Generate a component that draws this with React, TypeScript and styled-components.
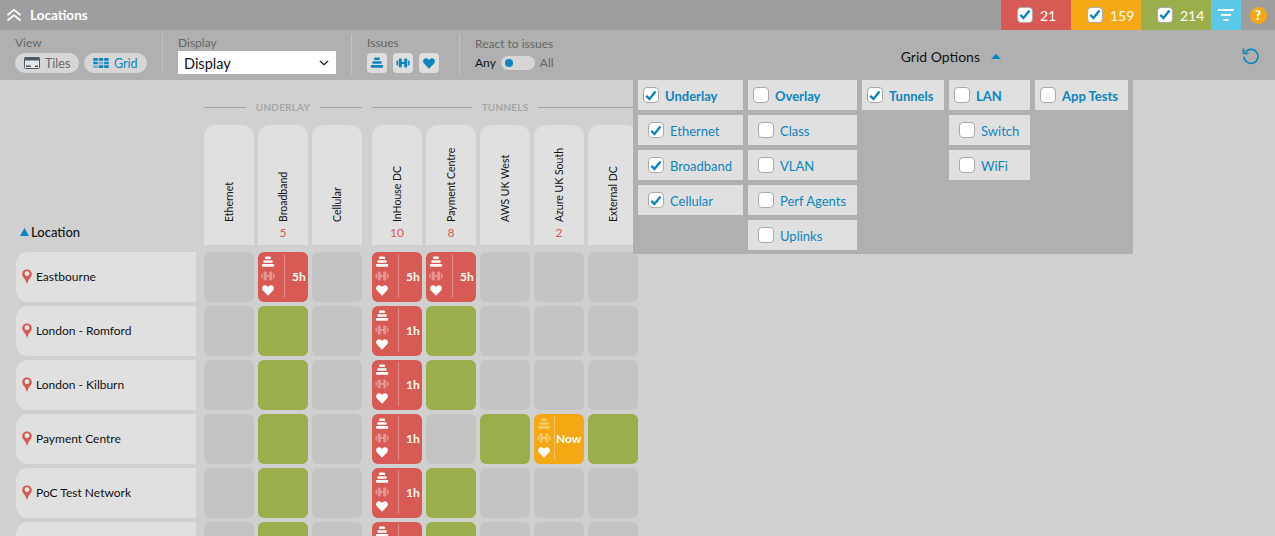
import React from 'react';
import styled, {createGlobalStyle} from 'styled-components';

const GlobalStyle = createGlobalStyle`
    html, body {
        margin: 0;
        padding: 0;
        background: #d0d0d0;
        font-family: Lato, "Liberation Sans", sans-serif;
    }
`;

const BLUE = '#0d85bd';

//Styled Components
const Page = styled.div`
    position: relative;
    width: 1275px;
    height: 536px;
    overflow: hidden;
    background: #d0d0d0;
`;

const Header = styled.header`
    display: flex;
    align-items: stretch;
    height: 30px;
    background: #9e9e9e;
`;

const HeaderTitle = styled.div`
    display: flex;
    align-items: center;
    gap: 8px;
    padding: 0 0 1px 6px;
    color: #fff;
    font-size: 13.5px;
    font-weight: 700;
    flex: 1;
`;

const StatusTab = styled.div<{$color: string}>`
    display: flex;
    align-items: center;
    gap: 7px;
    box-sizing: border-box;
    width: 70px;
    padding-left: 16px;
    background: ${p => p.$color};
    color: #fff;
    font-size: 14px;
`;

const FilterTab = styled.div`
    display: flex;
    align-items: center;
    justify-content: center;
    width: 30px;
    background: #5bc8e8;
`;

const HelpTab = styled.div`
    display: flex;
    align-items: center;
    justify-content: center;
    width: 34px;
`;

const HelpDot = styled.div`
    width: 17px;
    height: 17px;
    border-radius: 50%;
    background: #f4a914;
    color: #fff;
    font-size: 13px;
    font-weight: 900;
    line-height: 17px;
    text-align: center;
`;

const Toolbar = styled.div`
    display: flex;
    align-items: flex-start;
    height: 50px;
    box-sizing: border-box;
    padding: 4px 15px 0;
    background: #b0b0b0;
`;

const ToolSection = styled.div<{$width: number; $divider?: boolean}>`
    box-sizing: border-box;
    width: ${p => p.$width}px;
    height: 40px;
    padding-left: ${p => (p.$divider ? 15 : 0)}px;
    border-left: ${p => (p.$divider ? '1px solid #c2c2c2' : 'none')};
`;

const ToolLabel = styled.div<{$top?: number}>`
    color: #666;
    font-size: 12px;
    line-height: 14px;
    margin-top: ${p => p.$top ?? 2}px;
`;

const ToolRow = styled.div<{$gap: number; $top: number}>`
    display: flex;
    align-items: center;
    gap: ${p => p.$gap}px;
    margin-top: ${p => p.$top}px;
`;

const Pill = styled.div<{$active?: boolean; $width: number}>`
    display: flex;
    align-items: center;
    gap: 5px;
    box-sizing: border-box;
    width: ${p => p.$width}px;
    height: 20px;
    padding-left: 9px;
    border-radius: 10px;
    background: #d6d6d6;
    color: ${p => (p.$active ? BLUE : '#666')};
    font-size: 12.5px;
`;

const SelectBox = styled.div`
    display: flex;
    align-items: center;
    justify-content: space-between;
    box-sizing: border-box;
    width: 158px;
    height: 23px;
    margin-top: 1px;
    padding: 1px 7px 0 6px;
    background: #fff;
    color: #111;
    font-size: 14.5px;
`;

const IssueButton = styled.div`
    display: flex;
    align-items: center;
    justify-content: center;
    width: 20px;
    height: 20px;
    border-radius: 4px;
    background: #dedede;
`;

const ToggleText = styled.span<{$on?: boolean}>`
    color: ${p => (p.$on ? '#111' : '#666')};
    font-size: 12px;
`;

const ToggleTrack = styled.div`
    display: flex;
    align-items: center;
    box-sizing: border-box;
    width: 34px;
    height: 14px;
    padding-left: 4px;
    border-radius: 7px;
    background: #d6d6d6;
`;

const ToggleKnob = styled.div`
    width: 8px;
    height: 8px;
    border-radius: 50%;
    background: ${BLUE};
`;

const GridOptionsToggle = styled.div`
    display: flex;
    align-items: center;
    gap: 11px;
    margin-left: auto;
    margin-top: 14px;
    color: #111;
    font-size: 14px;
`;

const UndoButton = styled.div`
    display: flex;
    margin-left: 241px;
    margin-top: 13px;
`;

const OptionsPanel = styled.div`
    position: absolute;
    z-index: 2;
    top: 80px;
    left: 633px;
    display: flex;
    gap: 5px;
    padding: 0 5px 4px;
    background: #b0b0b0;
`;

const OptionColumn = styled.div<{$width: number}>`
    display: flex;
    flex-direction: column;
    gap: 5px;
    width: ${p => p.$width}px;
`;

const OptionItem = styled.div<{$sub?: boolean}>`
    display: flex;
    align-items: center;
    gap: 6px;
    box-sizing: border-box;
    height: 30px;
    padding: 1px 0 0 ${p => (p.$sub ? 10 : 5)}px;
    background: #e0e0e0;
    color: ${BLUE};
    font-size: 13px;
    font-weight: ${p => (p.$sub ? 400 : 700)};
`;

const CheckFrame = styled.span`
    display: flex;
    align-items: center;
    justify-content: center;
    box-sizing: border-box;
    width: 16px;
    height: 16px;
    flex: none;
    margin-top: -1px;
    border: 1px solid #a9a9a9;
    border-radius: 4px;
    background: #fff;
`;

const Board = styled.div`
    padding: 20px 0 0 16px;
`;

const HeadArea = styled.div`
    display: flex;
    align-items: flex-end;
    gap: 8px;
`;

const LocationHead = styled.div`
    display: flex;
    align-items: center;
    gap: 2px;
    box-sizing: border-box;
    width: 180px;
    height: 20px;
    margin-bottom: 10px;
    padding-left: 4px;
    color: #111;
    font-size: 13px;
    font-weight: 500;
`;

const Groups = styled.div`
    display: flex;
    gap: 10px;
`;

const GroupBlock = styled.div`
    display: flex;
    flex-direction: column;
    gap: 11px;
`;

const GroupTitle = styled.div`
    display: flex;
    align-items: center;
    gap: 10px;
    height: 14px;
    color: #a6a6a6;
    font-size: 10px;
    font-weight: 700;
    letter-spacing: 0.2px;

    &::before, &::after {
        content: '';
        flex: 1;
        height: 1px;
        background: #a6a6a6;
    }
`;

const CellRow = styled.div`
    display: flex;
    gap: 4px;
`;

const HeadCell = styled.div`
    display: flex;
    flex-direction: column;
    align-items: center;
    box-sizing: border-box;
    width: 50px;
    height: 120px;
    padding-bottom: 6px;
    border-radius: 12px 12px 0 0;
    background: #e0e0e0;
    margin-bottom: 7px;
`;

const HeadName = styled.div`
    flex: 1;
    display: flex;
    align-items: center;
    justify-content: flex-start;
    margin-bottom: 4px;
    writing-mode: vertical-rl;
    transform: rotate(180deg);
    color: #111;
    font-size: 10.5px;
`;

const HeadCount = styled.div`
    height: 13px;
    color: #d75a54;
    font-size: 12px;
    line-height: 13px;
`;

const Rows = styled.div`
    display: flex;
    flex-direction: column;
    gap: 4px;
`;

const Row = styled.div`
    display: flex;
    gap: 8px;
`;

const RowLabel = styled.div`
    display: flex;
    align-items: center;
    gap: 4px;
    box-sizing: border-box;
    width: 180px;
    height: 50px;
    padding: 0 0 1px 6px;
    border-radius: 12px 0 0 12px;
    background: #e0e0e0;
    color: #111;
    font-size: 12px;
`;

const Cell = styled.div<{$color: string}>`
    display: flex;
    width: 50px;
    height: 50px;
    border-radius: 6px;
    background: ${p => p.$color};
`;

const IconCol = styled.div<{$width: number}>`
    display: flex;
    flex-direction: column;
    align-items: flex-start;
    justify-content: space-between;
    box-sizing: border-box;
    width: ${p => p.$width}px;
    height: 44px;
    margin-top: 2px;
    padding: 1px 0 1px 3px;
    border-right: 1px solid rgba(255, 255, 255, 0.3);
`;

const CellTime = styled.div<{$inset: number}>`
    flex: 1;
    display: flex;
    align-items: center;
    padding: 0 0 2px ${p => p.$inset}px;
    color: #fff;
    font-size: 12px;
    font-weight: 700;
`;

//Icons
const StackIcon = ({color, dim}: {color: string; dim?: boolean}) => (
    <svg width="14" height="14" viewBox="0 0 14 14" opacity={dim ? 0.35 : 1}>
        <rect x="4" y="1.500" width="6" height="2.600" rx="1.200" fill={color}/>
        <rect x="2.300" y="5.200" width="9.400" height="2.600" rx="1" fill={color}/>
        <rect x="0.800" y="9" width="12.400" height="2.800" rx="1" fill={color}/>
    </svg>
);

const PulseIcon = ({color, dim}: {color: string; dim?: boolean}) => (
    <svg width="14" height="14" viewBox="0 0 14 14" opacity={dim ? 0.35 : 1}>
        <rect x="0.500" y="4.500" width="1.600" height="5" rx="0.800" fill={color}/>
        <rect x="2.800" y="2.500" width="3" height="9" rx="1" fill={color}/>
        <rect x="8.200" y="2.500" width="3" height="9" rx="1" fill={color}/>
        <rect x="11.900" y="4.500" width="1.600" height="5" rx="0.800" fill={color}/>
        <rect x="5" y="6" width="4" height="2" fill={color}/>
    </svg>
);

const HeartIcon = ({color}: {color: string}) => (
    <svg width="14" height="14" viewBox="0 0 14 14">
        <path d="M7 12.800 2 7.600C.8 6.300.8 4.200 2 3c1.300-1.200 3.300-1 4.300.3l.7.8.7-.8c1-1.300 3-1.500 4.300-.3 1.200 1.200 1.200 3.300 0 4.600z" fill={color}/>
    </svg>
);

const PinIcon = () => (
    <svg width="10" height="16" viewBox="0 0 10 16">
        <path d="M5 .4C2.300.4.200 2.400.200 5c0 1.600.800 2.900 1.800 4.100C3.200 10.700 4.400 12.800 5 15.600c.6-2.800 1.800-4.900 3-6.500 1-1.200 1.800-2.500 1.800-4.100C9.800 2.400 7.700.4 5 .4z" fill="#d75a54"/>
        <circle cx="5" cy="4.700" r="2.400" fill="#e6e6e6"/>
    </svg>
);

const CheckMark = () => (
    <svg width="12" height="11" viewBox="0 0 12 11">
        <path d="M1.300 5.800 4.500 9l6-7.400" fill="none" stroke={BLUE} strokeWidth="2.400"/>
    </svg>
);

const CheckBox = ({checked}: {checked?: boolean}) => (
    <CheckFrame>{checked && <CheckMark/>}</CheckFrame>
);

const TriangleUp = ({width, height}: {width: number; height: number}) => (
    <svg width={width} height={height} viewBox="0 0 10 8" preserveAspectRatio="none">
        <path d="M5 0 10 8H0z" fill={BLUE}/>
    </svg>
);

//Data
type CellKind = '' | 'g' | 'r5' | 'r1' | 'r' | 'now';

const underlay = [
    {name: 'Ethernet'},
    {name: 'Broadband', count: 5},
    {name: 'Cellular'},
];

const tunnels = [
    {name: 'InHouse DC', count: 10},
    {name: 'Payment Centre', count: 8},
    {name: 'AWS UK West'},
    {name: 'Azure UK South', count: 2},
    {name: 'External DC'},
];

const rows: {name: string; cells: CellKind[]}[] = [
    {name: 'Eastbourne', cells: ['', 'r5', '', 'r5', 'r5', '', '', '']},
    {name: 'London - Romford', cells: ['', 'g', '', 'r1', 'g', '', '', '']},
    {name: 'London - Kilburn', cells: ['', 'g', '', 'r1', 'g', '', '', '']},
    {name: 'Payment Centre', cells: ['', 'g', '', 'r1', '', 'g', 'now', 'g']},
    {name: 'PoC Test Network', cells: ['', 'g', '', 'r1', 'g', '', '', '']},
    {name: '', cells: ['', 'g', '', 'r', 'g', '', '', '']},
];

const optionColumns = [
    {width: 105, items: [
        {label: 'Underlay', checked: true},
        {label: 'Ethernet', checked: true, sub: true},
        {label: 'Broadband', checked: true, sub: true},
        {label: 'Cellular', checked: true, sub: true},
    ]},
    {width: 109, items: [
        {label: 'Overlay'},
        {label: 'Class', sub: true},
        {label: 'VLAN', sub: true},
        {label: 'Perf Agents', sub: true},
        {label: 'Uplinks', sub: true},
    ]},
    {width: 82, items: [{label: 'Tunnels', checked: true}]},
    {width: 81, items: [
        {label: 'LAN'},
        {label: 'Switch', sub: true},
        {label: 'WiFi', sub: true},
    ]},
    {width: 93, items: [{label: 'App Tests'}]},
];

const timeLabel: Record<string, string> = {r5: '5h', r1: '1h', r: ''};

const GridCell = ({kind}: {kind: CellKind}) => {
    if (kind === '') return <Cell $color="#c4c4c4"/>;
    if (kind === 'g') return <Cell $color="#9aae4c"/>;
    if (kind === 'now') {
        return (
            <Cell $color="#f4a914">
                <IconCol $width={21}>
                    <StackIcon color="#fff" dim/>
                    <PulseIcon color="#fff" dim/>
                    <HeartIcon color="#fff"/>
                </IconCol>
                <CellTime $inset={1}>Now</CellTime>
            </Cell>
        );
    }
    return (
        <Cell $color="#d75a54">
            <IconCol $width={27}>
                <StackIcon color="#fff"/>
                <PulseIcon color="#fff" dim/>
                <HeartIcon color="#fff"/>
            </IconCol>
            <CellTime $inset={7}>{timeLabel[kind]}</CellTime>
        </Cell>
    );
};

const HeadGroup = ({title, columns}: {title: string; columns: {name: string; count?: number}[]}) => (
    <GroupBlock>
        <GroupTitle>{title}</GroupTitle>
        <CellRow>
            {columns.map(col => (
                <HeadCell key={col.name}>
                    <HeadName>{col.name}</HeadName>
                    <HeadCount>{col.count}</HeadCount>
                </HeadCell>
            ))}
        </CellRow>
    </GroupBlock>
);

export default function App() {
    return (
        <Page>
            <GlobalStyle/>
            {/* Title bar */}
            <Header>
                <HeaderTitle>
                    <svg width="16" height="14" viewBox="0 0 16 14">
                        <path d="M1.500 7 8 1.800 14.500 7M1.500 12.500 8 7.300l6.500 5.200" fill="none" stroke="#fff" strokeWidth="1.800"/>
                    </svg>
                    Locations
                </HeaderTitle>
                <StatusTab $color="#d75a54"><CheckBox checked/>21</StatusTab>
                <StatusTab $color="#f4a914"><CheckBox checked/>159</StatusTab>
                <StatusTab $color="#9aae4c"><CheckBox checked/>214</StatusTab>
                <FilterTab>
                    <svg width="18" height="14" viewBox="0 0 18 14">
                        <path d="M1 2h16M4 7h10M6.500 12h5" stroke="#fff" strokeWidth="2"/>
                    </svg>
                </FilterTab>
                <HelpTab><HelpDot>?</HelpDot></HelpTab>
            </Header>

            {/* Toolbar */}
            <Toolbar>
                <ToolSection $width={147}>
                    <ToolLabel>View</ToolLabel>
                    <ToolRow $gap={5} $top={3}>
                        <Pill $width={64}>
                            <svg width="16" height="12" viewBox="0 0 16 12">
                                <rect x="0.500" y="0.500" width="15" height="11" rx="1" fill="#e6e6e6" stroke="#4f5c66"/>
                                <rect x="0.500" y="0.500" width="15" height="3" fill="#4f5c66"/>
                                <rect x="2" y="8.500" width="5" height="1.500" fill="#4f5c66"/>
                                <rect x="11" y="8.500" width="3" height="1.500" fill="#4f5c66"/>
                            </svg>
                            Tiles
                        </Pill>
                        <Pill $width={63} $active>
                            <svg width="16" height="10" viewBox="0 0 17 11">
                                <path d="M0 0h5v3H0zM6 0h5v3H6zM12 0h5v3h-5zM0 4h5v3H0zM12 4h5v3h-5zM6 8h5v3H6zM12 8h5v3h-5z" fill={BLUE}/>
                                <path d="M6 4h5v3H6zM0 8h5v3H0z" fill="#6db3d6"/>
                            </svg>
                            Grid
                        </Pill>
                    </ToolRow>
                </ToolSection>
                <ToolSection $width={189} $divider>
                    <ToolLabel>Display</ToolLabel>
                    <SelectBox>
                        Display
                        <svg width="10" height="6" viewBox="0 0 12 7" preserveAspectRatio="none">
                            <path d="M1 1l5 4.500L11 1" fill="none" stroke="#111" strokeWidth="1.500"/>
                        </svg>
                    </SelectBox>
                </ToolSection>
                <ToolSection $width={108} $divider>
                    <ToolLabel>Issues</ToolLabel>
                    <ToolRow $gap={6} $top={3}>
                        <IssueButton><StackIcon color={BLUE}/></IssueButton>
                        <IssueButton><PulseIcon color={BLUE}/></IssueButton>
                        <IssueButton><HeartIcon color={BLUE}/></IssueButton>
                    </ToolRow>
                </ToolSection>
                <ToolSection $width={110} $divider>
                    <ToolLabel $top={3}>React to issues</ToolLabel>
                    <ToolRow $gap={5} $top={4}>
                        <ToggleText $on>Any</ToggleText>
                        <ToggleTrack><ToggleKnob/></ToggleTrack>
                        <ToggleText>All</ToggleText>
                    </ToolRow>
                </ToolSection>
                <GridOptionsToggle>
                    Grid Options
                    <TriangleUp width={10} height={5}/>
                </GridOptionsToggle>
                <UndoButton>
                    <svg width="18" height="18" viewBox="0 0 18 18">
                        <path d="M3.200 5.500A7 7 0 1 1 2 9.500" fill="none" stroke={BLUE} strokeWidth="1.600"/>
                        <path d="M1.500 1.500v5h5" fill="none" stroke={BLUE} strokeWidth="1.600"/>
                    </svg>
                </UndoButton>
            </Toolbar>

            {/* Grid options dropdown */}
            <OptionsPanel>
                {optionColumns.map(col => (
                    <OptionColumn key={col.items[0].label} $width={col.width}>
                        {col.items.map((item: {label: string; checked?: boolean; sub?: boolean}) => (
                            <OptionItem key={item.label} $sub={item.sub}>
                                <CheckBox checked={item.checked}/>
                                {item.label}
                            </OptionItem>
                        ))}
                    </OptionColumn>
                ))}
            </OptionsPanel>

            {/* Location grid */}
            <Board>
                <HeadArea>
                    <LocationHead><TriangleUp width={9} height={8}/>Location</LocationHead>
                    <Groups>
                        <HeadGroup title="UNDERLAY" columns={underlay}/>
                        <HeadGroup title="TUNNELS" columns={tunnels}/>
                    </Groups>
                </HeadArea>
                <Rows>
                    {rows.map((row, r) => (
                        <Row key={r}>
                            <RowLabel>{row.name && <PinIcon/>}{row.name}</RowLabel>
                            <Groups>
                                <CellRow>
                                    {row.cells.slice(0, 3).map((c, i) => <GridCell key={i} kind={c}/>)}
                                </CellRow>
                                <CellRow>
                                    {row.cells.slice(3).map((c, i) => <GridCell key={i} kind={c}/>)}
                                </CellRow>
                            </Groups>
                        </Row>
                    ))}
                </Rows>
            </Board>
        </Page>
    );
}
